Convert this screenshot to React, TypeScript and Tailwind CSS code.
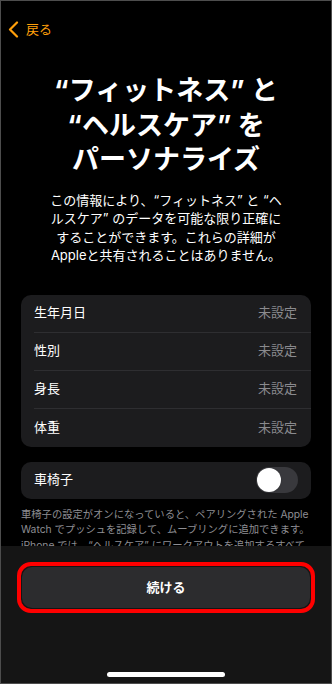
import React from "react";

const rows = ["生年月日", "性別", "身長", "体重"];

export default function App() {
  return (
    <div className="relative w-[332px] h-[684px] overflow-hidden border border-[#4d4d4d] bg-black text-white font-['Inter','Noto_Sans_CJK_JP',sans-serif]">
      {/* nav */}
      <div className="flex items-center h-[18px] mt-[19px] ml-[7px]">
        <svg width="11" height="17" viewBox="0 0 11 17" className="mr-[7px]">
          <polyline points="9,1.5 2,8.5 9,15.5" fill="none" stroke="#ff9f0a" strokeWidth="2.2" strokeLinecap="round" strokeLinejoin="round" />
        </svg>
        <span className="text-[13px] leading-[18px] text-[#ff9f0a]">戻る</span>
      </div>

      {/* title */}
      <h1 className="mt-[36px] text-center text-[27px] leading-[34.5px] font-bold">
        “フィットネス” と<br />“ヘルスケア” を<br />パーソナライズ
      </h1>

      {/* body */}
      <p className="mt-[13px] text-center text-[13px] leading-[18.5px] whitespace-nowrap">
        この情報により、“フィットネス” と “ヘ<br />
        ルスケア” のデータを可能な限り正確に<br />
        することができます。これらの詳細が<br />
        Appleと共有されることはありません。
      </p>

      {/* card 1 */}
      <div className="mx-[20px] mt-[30px] rounded-[10px] bg-[#1c1c1e] overflow-hidden">
        {rows.map((r, i) => (
          <div key={r} className="flex h-[38px] pl-[13px]">
            <div className={`flex flex-1 items-center justify-between pr-[14px] ${i < rows.length - 1 ? "border-b border-[#2e2e31]" : ""}`}>
              <span className="text-[13px]">{r}</span>
              <span className="text-[13px] text-[#8a8a8e]">未設定</span>
            </div>
          </div>
        ))}
      </div>

      {/* card 2 */}
      <div className="mx-[20px] mt-[15px] h-[37px] rounded-[10px] bg-[#1c1c1e] flex items-center justify-between pl-[13px] pr-[13px]">
        <span className="text-[13px]">車椅子</span>
        <div className="w-[42px] h-[26px] rounded-full bg-[#39393d] flex items-center pl-[1px]">
          <div className="w-[24px] h-[24px] rounded-full bg-white shadow" />
        </div>
      </div>

      {/* footnote */}
      <p className="mx-[20px] mt-[8px] text-[10.3px] leading-[15.5px] text-[#8e8e93] whitespace-nowrap">
        車椅子の設定がオンになっていると、ペアリングされた Apple<br />
        Watch でプッシュを記録して、ムーブリングに追加できます。<br />
        iPhone では、“ヘルスケア” にワークアウトを追加するすべて
      </p>

      {/* bottom panel */}
      <div className="absolute left-0 right-0 bottom-0 h-[137px] bg-[#151515] flex flex-col">
        <div className="mx-[16px] mt-[16px] rounded-[14px] border-[4px] border-[#ff0000] p-px">
          <div className="h-[41px] rounded-[10px] bg-[#2c2c2e] flex items-center justify-center">
            <span className="text-[13px] font-bold">続ける</span>
          </div>
        </div>
        <div className="mt-auto mb-[6px] mx-auto w-[118px] h-[5px] rounded-full bg-white" />
      </div>
    </div>
  );
}
